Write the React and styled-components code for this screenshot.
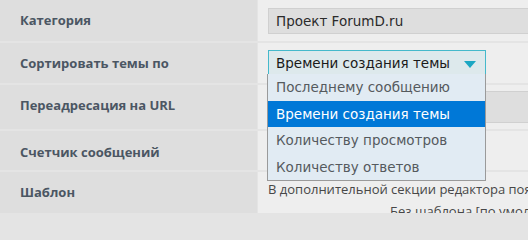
import React from 'react';
import styled, { createGlobalStyle, css } from 'styled-components';

const GlobalStyle = createGlobalStyle`
  html, body {
    margin: 0;
    padding: 0;
    background: #e4e4e4;
    overflow: hidden;
  }
`;

const options = [
  'Последнему сообщению',
  'Времени создания темы',
  'Количеству просмотров',
  'Количеству ответов',
];

const fieldFont = css`
  font-family: 'DejaVu Sans', Verdana, sans-serif;
  font-size: 13.5px;
  letter-spacing: 0;
`;

const Form = styled.div`
  position: relative;
  width: 528px;
  height: 213px;
  display: grid;
  row-gap: 2px;
  align-content: start;
  background: #e4e4e4;
  overflow: hidden;
`;

const Row = styled.div`
  display: grid;
  grid-template-columns: 257px 1fr;
  column-gap: 1px;
  height: ${(p) => p.$h}px;
`;

const Label = styled.div`
  background: #dedede;
  padding: ${(p) => p.$top || 12}px 20px 0;
  font-family: 'Open Sans', 'Liberation Sans', sans-serif;
  font-weight: 700;
  font-size: 13px;
  line-height: 18px;
  color: #4b5663;
`;

const Value = styled.div`
  background: #eeeeee;
  padding: ${(p) => p.$top || 8}px 0 0 10px;
  overflow: hidden;
`;

const Input = styled.div`
  ${fieldFont};
  box-sizing: border-box;
  height: ${(p) => p.$h || 26}px;
  background: #dedede;
  border: 1px solid #d0d0d0;
  border-right: none;
  padding: 0 7px;
  display: flex;
  align-items: center;
  color: #2b2b2b;
`;

const Select = styled.div`
  ${fieldFont};
  box-sizing: border-box;
  width: 218px;
  height: 26px;
  background: #dde9ec;
  border: 1px solid #45b9cb;
  padding: 0 9px 0 7px;
  display: flex;
  align-items: center;
  justify-content: space-between;
  color: #1a1a1a;
`;

const Arrow = styled.span`
  width: 0;
  height: 0;
  border-left: 6px solid transparent;
  border-right: 6px solid transparent;
  border-top: 7px solid #1ba7c3;
  margin-top: 2px;
`;

const Menu = styled.ul`
  position: absolute;
  top: 74px;
  left: 267px;
  width: 219px;
  box-sizing: border-box;
  margin: 0;
  padding: 0;
  list-style: none;
  background: #e1ebf3;
  border: 1px solid #9a9a9a;
  border-top: none;
  z-index: 2;
`;

const Item = styled.li`
  ${fieldFont};
  height: 26.5px;
  padding: 0 8px;
  display: flex;
  align-items: center;
  color: ${(p) => (p.$active ? '#ffffff' : '#555a5e')};
  background: ${(p) => (p.$active ? '#0078d7' : 'transparent')};
`;

const Note = styled.div`
  font-family: 'Open Sans', 'Liberation Sans', sans-serif;
  font-size: 13px;
  line-height: 22px;
  color: #474747;
  white-space: nowrap;
`;

const Indent = styled.div`
  padding-left: 122px;
`;

const App = () => {
  return (
    <>
      <GlobalStyle />
      <Form>
        <Row $h={41}>
          <Label $top={11}>Категория</Label>
          <Value>
            <Input>Проект ForumD.ru</Input>
          </Value>
        </Row>
        <Row $h={40}>
          <Label $top={11}>Сортировать темы по</Label>
          <Value $top={7}>
            <Select>
              Времени создания темы
              <Arrow />
            </Select>
          </Value>
        </Row>
        <Row $h={44}>
          <Label $top={11}>Переадресация на URL</Label>
          <Value $top={6}>
            <Input $h={32} />
          </Value>
        </Row>
        <Row $h={39}>
          <Label $top={12}>Счетчик сообщений</Label>
          <Value />
        </Row>
        <Row $h={42}>
          <Label $top={11}>Шаблон</Label>
          <Value $top={6}>
            <Note>В дополнительной секции редактора появится выбор шаблона</Note>
            <Indent>
              <Note>Без шаблона [по умолчанию]</Note>
            </Indent>
          </Value>
        </Row>
        <Menu>
          {options.map((o) => (
            <Item key={o} $active={o === 'Времени создания темы'}>
              {o}
            </Item>
          ))}
        </Menu>
      </Form>
    </>
  );
};

export default App;
